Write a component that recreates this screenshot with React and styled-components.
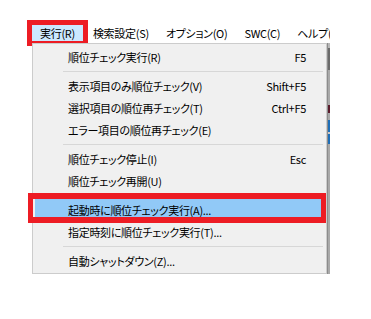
import styled, { createGlobalStyle } from 'styled-components';

const menus = [
    { label: "実行(R)", open: true },
    { label: "検索設定(S)" },
    { label: "オプション(O)" },
    { label: "SWC(C)" },
    { label: "ヘルプ(H)" },
];

const items = [
    { label: "順位チェック実行(R)", key: "F5" },
    { sep: true },
    { label: "表示項目のみ順位チェック(V)", key: "Shift+F5" },
    { label: "選択項目の順位再チェック(T)", key: "Ctrl+F5" },
    { label: "エラー項目の順位再チェック(E)" },
    { sep: true },
    { label: "順位チェック停止(I)", key: "Esc" },
    { label: "順位チェック再開(U)" },
    { sep: true },
    { label: "起動時に順位チェック実行(A)...", marked: true },
    { label: "指定時刻に順位チェック実行(T)..." },
    { sep: true },
    { label: "自動シャットダウン(Z)..." },
];

// bits of the window behind the menu that peek out on the right
const behind = [
    { h: 5, c: "#b8b8b8" },
    { h: 22, c: "#6b6b6b" },
    { h: 35, c: "#a9a9a9" },
    { h: 8, c: "#5a1c2c" },
    { h: 7, c: "#a9a9a9" },
    { h: 12, c: "#1f6fb8" },
    { h: 2, c: "#c9c9c9" },
    { h: 10, c: "#1f6fb8" },
    { h: 130, c: "#a9a9a9" },
];

export default function App() {
    return (
        <>
            <GlobalStyle />
            <Page>
                <Window>
                    <MenuBar>
                        {menus.map((m) => (
                            <MenuTitle key={m.label} open={m.open}>{m.label}</MenuTitle>
                        ))}
                    </MenuBar>
                    <DropArea>
                        <Dropdown>
                            {items.map((it, i) =>
                                it.sep
                                    ? <Separator key={i} />
                                    : (
                                        <Item key={i} marked={it.marked}>
                                            <span>{it.label}</span>
                                            {it.key && <span>{it.key}</span>}
                                        </Item>
                                    )
                            )}
                        </Dropdown>
                        <Behind>
                            {behind.map((b, i) => <Chunk key={i} h={b.h} c={b.c} />)}
                        </Behind>
                    </DropArea>
                </Window>
            </Page>
        </>
    );
}

const GlobalStyle = createGlobalStyle`
    * {
        box-sizing: border-box;
    }

    body {
        margin: 0;
        background: #FFFFFF;
        font-family: "Noto Sans CJK JP", "Noto Sans", sans-serif;
        font-size: 11px;
        letter-spacing: -0.3px;
        font-feature-settings: "palt";
        color: #000000;
    }
`;

const Page = styled.div`
    width: 371px;
    height: 319px;
    background: #FFFFFF;
    overflow: hidden;
`;

const Window = styled.div`
    width: 330px;
    padding-top: 25px;
    overflow: hidden;
`;

const MenuBar = styled.div`
    height: 16px;
    padding-left: 32px;
    display: flex;
    gap: 3px;
    align-items: center;
`;

const MenuTitle = styled.div`
    height: 16px;
    padding: ${props => props.open ? "0 8px" : "0 7px"};
    line-height: 16px;
    white-space: nowrap;
    flex-shrink: 0;
    background: ${props => props.open ? "#CCE8FF" : "transparent"};
    outline: ${props => props.open ? "5px solid #ED1C24" : "none"};
`;

const DropArea = styled.div`
    margin-top: 2px;
    padding-left: 32px;
    display: flex;
`;

const Dropdown = styled.div`
    width: 295px;
    padding: 2px 0 1px;
    background: #F0F0F0;
    border: 1px solid #CCCCCC;
    display: flex;
    flex-direction: column;
`;

const Item = styled.div`
    height: 22px;
    margin: 0 2px;
    padding: 0 18px 0 33px;
    display: flex;
    justify-content: space-between;
    align-items: center;
    line-height: 22px;
    white-space: nowrap;
    position: relative;
    background: ${props => props.marked ? "#91C9F7" : "transparent"};

    &::after {
        content: "";
        display: ${props => props.marked ? "block" : "none"};
        position: absolute;
        top: -6px;
        bottom: -2px;
        left: -7px;
        right: -2px;
        border-style: solid;
        border-color: #ED1C24;
        border-width: 6px 5px;
        z-index: 2;
    }
`;

const Separator = styled.div`
    height: 1px;
    margin: 3px 3px 3px 30px;
    background: #D7D7D7;
`;

const Behind = styled.div`
    width: 3px;
    display: flex;
    flex-direction: column;
    border-left: 1px solid #8C8C8C;
`;

const Chunk = styled.div`
    height: ${props => props.h}px;
    background: ${props => props.c};
    flex-shrink: 0;
`;
